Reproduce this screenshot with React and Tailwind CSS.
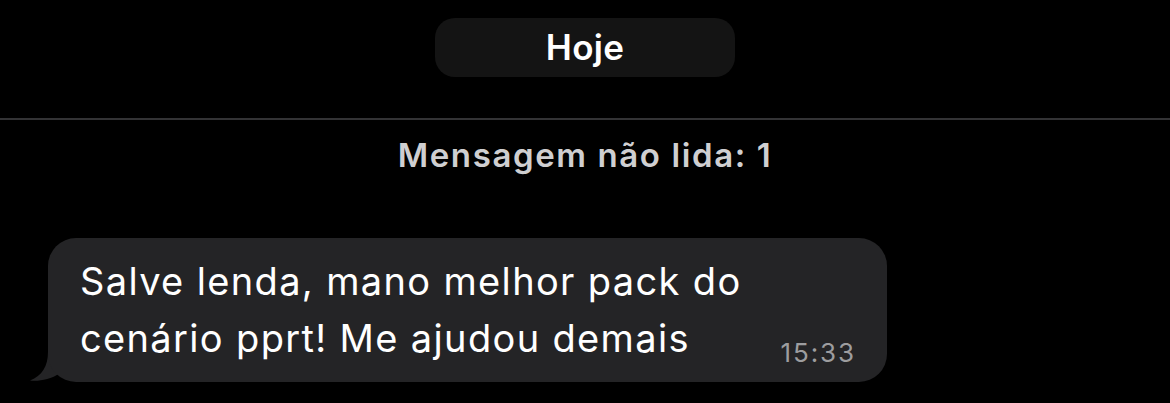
export default function App() {
  return (
    <div
      className="w-full h-[403px] bg-black overflow-hidden flex flex-col"
      style={{ fontFamily: "Inter, 'Noto Sans', sans-serif" }}
    >
      <div className="flex justify-center pt-[18px]">
        <div className="w-[300px] h-[59px] rounded-[20px] bg-[#141414] flex items-center justify-center">
          <span className="text-white text-[35px] font-semibold leading-none tracking-[0.3px]">Hoje</span>
        </div>
      </div>
      <div className="mt-[41px] h-[2px] bg-[#333335]" />
      <div className="flex justify-center mt-[15px]">
        <span className="text-[#cfcfd1] text-[33px] font-semibold leading-[40px] tracking-[1.6px]">Mensagem não lida: 1</span>
      </div>
      <div className="mt-[63px] ml-[48px] w-[839px] h-[144px] relative">
        <svg
          className="absolute left-[-18px] bottom-0"
          width="56"
          height="42"
          viewBox="0 0 56 42"
        >
          <path
            d="M18,0 L18,12 C18,26 12,36 0,40.5 C8,41.5 20,40 30,33 C36,38 44,42 56,42 L56,0 Z"
            fill="#242426"
          />
        </svg>
        <div className="relative w-full h-full rounded-[28px] bg-[#242426] flex items-end pl-[32px] pr-[31px] pt-[15px] pb-[14px]">
          <div className="self-start text-white text-[38px] leading-[57px] tracking-[1.35px] whitespace-nowrap">
            Salve lenda, mano melhor pack do
            <br />
            cenário pprt! Me ajudou demais
          </div>
          <div className="ml-auto text-[#9d9d9f] text-[26px] leading-[30px] tracking-[1.9px]">15:33</div>
        </div>
      </div>
    </div>
  );
}
